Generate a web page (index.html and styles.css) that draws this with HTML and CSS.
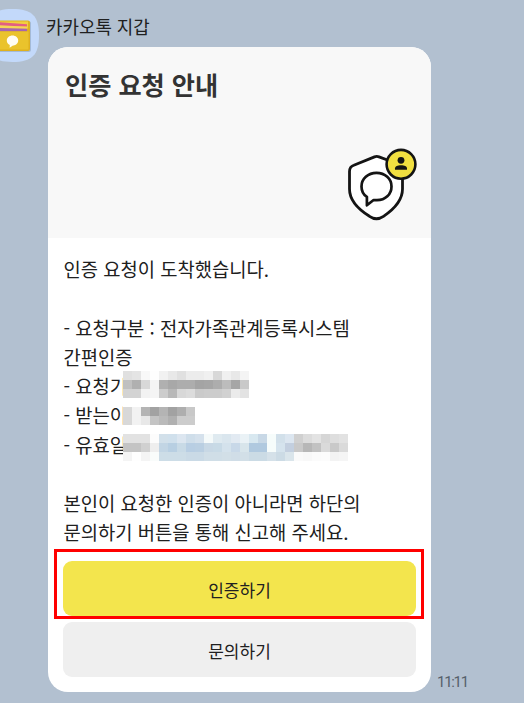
FILE: index.html
```
<!DOCTYPE html>
<html lang="ko">
<head>
    <meta charset="UTF-8" />
    <meta name="viewport" content="width=device-width, initial-scale=1.0" />
    <title>카카오톡 지갑</title>
    <link rel="stylesheet" href="styles.css">
</head>
<body>
    <div class="chat">
        <svg class="avatar" viewBox="0 0 53 53">
            <path fill="#c3d9fa" d="M26.500 0C46 0 53 7 53 26.500S46 53 26.500 53 0 46 0 26.500 7 0 26.500 0z" />
            <rect x="8" y="12" width="37" height="31" rx="2.500" fill="#8fa5c0" opacity=".6" />
            <rect x="8" y="11.500" width="36" height="30.500" rx="2" fill="#dfb11f" />
            <path fill="#f2cf3e" d="M10 12.500h32v7H10z" />
            <path fill="#e25f82" d="M10 13l31 2.300v2.200H10z" />
            <path fill="#f5d658" d="M10 16l31 1.800v2H10z" />
            <path fill="#a766ae" d="M10 19l31 .8v2.400H10z" />
            <path fill="#eac32c" d="M8 22.500h34.500v18H8z" />
            <path fill="#fffdf3" d="M26.500 26.500c3.300 0 5.700 2.200 5.700 5s-2.400 5-5.200 5l-3.400 2.200.2-2.700c-1.800-.9-3-2.500-3-4.500 0-2.800 2.400-5 5.700-5z" />
        </svg>

        <div class="message">
            <div class="sender">카카오톡 지갑</div>
            <div class="row">
                <div class="card">
                    <div class="card-header">
                        <h1 class="title">인증 요청 안내</h1>
                        <svg class="shield" viewBox="0 0 72 76" fill="none" stroke="#141414" stroke-width="2.800" stroke-linejoin="round">
                            <path fill="#fff" d="M29.500 10.900Q31.700 10 34 10.900L44.500 14.800l13 5V43c0 10.500-7.300 19.400-19 27.300-4.800 3.300-9.300 3.300-14 0C12 62.500 4.500 53.500 4.500 43V25.500c0-3.300 1.200-5.200 4.300-6.300z" />
                            <path stroke-width="2.700" d="M31.500 26.800c8.600 0 15 5.900 15 13.600 0 8-6.300 13.800-14.500 13.800-1.200 0-2.300 0-3.400-.2L21.900 59.300v-8.500C18.200 48.500 16.500 44.900 16.500 40.400c0-7.700 6.500-13.600 15-13.600z" />
                            <circle cx="56" cy="18.300" r="14.400" fill="#f1df40" stroke-width="2.600" />
                            <circle cx="56" cy="14.300" r="3.400" fill="#141414" stroke="none" />
                            <path fill="#141414" stroke="none" d="M50 23.800v-1.300c0-2.200 2.500-3.200 6-3.200s6 1 6 3.200v1.300z" />
                        </svg>
                    </div>
                    <div class="card-body">
                        <p>인증 요청이 도착했습니다.</p>
                        <p class="blank"></p>
                        <p>- 요청구분 : 전자가족관계등록시스템</p>
                        <p>간편인증</p>
                        <p class="masked"><span>- 요청기</span><svg class="mask" id="mask-agency"></svg></p>
                        <p class="masked"><span>- 받는이</span><svg class="mask" id="mask-receiver"></svg></p>
                        <p class="masked"><span>- 유효일</span><svg class="mask" id="mask-expiry"></svg></p>
                        <p class="blank"></p>
                        <p>본인이 요청한 인증이 아니라면 하단의</p>
                        <p>문의하기 버튼을 통해 신고해 주세요.</p>
                    </div>
                    <div class="buttons">
                        <button class="confirm">인증하기</button>
                        <button>문의하기</button>
                        <div class="highlight"></div>
                    </div>
                </div>
                <span class="time">11:11</span>
            </div>
        </div>
    </div>

    <script>
    // Pixelated blocks over the private values
    const size = 9;
    const masks = {
      'mask-agency': [
        'e0e0e0 e4e4e4 f8f8f8 fefefe f1f1f1 e8e8e8 e0e0e0 ececec ececec f0f0f0 d8d8d8 f0f0f0 e8e8e8 f4f4f4',
        'c0c0c0 b0b0b0 d8d8d8 f4f4f4 b0b0b0 a8a8a8 adadad adadad a4a4a4 a6a6a6 adadad bcbcbc a6a6a6 c9c9c9',
        'd3d3d3 d3d3d3 f2f2f2 f4f4f4 cccccc b8b8b8 d8d8d8 dcdcdc cacaca cccccc cccccc d1d1d1 ebebeb e3e3e3'
      ],
      'mask-receiver': [
        'd8d8d8 f2f2f2 b4b4b4 a2a2a2 b4b4b4 a2a2a2 aeaeae c8c8c8',
        'd8d8d8 f2f2f2 e8e8e8 c4c4c4 bababa b0b0b0 cccccc cccccc'
      ],
      'mask-expiry': [
        'e2e2e2 e2e2e2 e2e2e2 fcfcfc d2e0ea d0e0ec dce6f0 cfdeea d5e1ec f5fafa dfeaf0 dae6ee e2eaf2 eaf2f6 d8e8f0 c8d8e6 f6fcfb d2e0ea dce6f0 d0d0d0 dcdcdc e3e3e3 d6d6d6 dedede e2e2e2',
        'c4c4c4 c4c4c4 d0d0d0 eeeeee c2d5e4 b8cfe2 c8dae6 b8cee3 bacfe2 c8d8e5 c8dae6 d4e2ec c8d8e8 d8e5eb b0c9df b0c9df f6fcfb d5e3ed c3cfdf c9c9c9 b7b7b7 c2c2c2 dadada c9c9c9 dadada',
        'f4f4f4 fefefe f4f4f4 f9fcfb cddde7 cddde7 cddde7 cadae6 cadae6 d0dee7 d0dee7 d2dfe7 d0dde7 d2dfe7 cbdbe5 cbdbe5 d5e1e9 ccdbe5 dae5eb fafafa f8f8f8 fbfbfb fcfcfc f3f3f3 f5f5f5'
      ]
    };

    Object.keys(masks).forEach(id => {
      const svg = document.getElementById(id);
      const rows = masks[id].map(row => row.split(' '));
      svg.setAttribute('width', rows[0].length * size);
      svg.setAttribute('height', rows.length * size);

      rows.forEach((row, y) => {
        row.forEach((color, x) => {
          const rect = document.createElementNS('http://www.w3.org/2000/svg', 'rect');
          rect.setAttribute('x', x * size);
          rect.setAttribute('y', y * size);
          rect.setAttribute('width', size);
          rect.setAttribute('height', size);
          rect.setAttribute('fill', '#' + color);
          svg.appendChild(rect);
        });
      });
    });
    </script>
</body>
</html>
```
FILE: styles.css
```
* {
    box-sizing: border-box;
}

body {
    margin: 0;
    height: 703px;
    overflow: hidden;
    background-color: #b2c0d0;
    color: #202020;
    font-family: 'Noto Sans CJK KR', sans-serif;
}

.chat {
    display: flex;
    align-items: flex-start;
    padding-top: 9px;
}

.avatar {
    flex: none;
    width: 53px;
    height: 53px;
    margin-left: -14.5px;
}

.message {
    padding-left: 7.5px;
}

.sender {
    height: 38px;
    line-height: 35px;
    font-size: 17.9px;
    white-space: nowrap;
}

.row {
    display: flex;
    align-items: flex-end;
    padding-left: 2px;
}

.card {
    flex: none;
    width: 383px;
    height: 645px;
    border-radius: 20px;
    background-color: #fff;
    overflow: hidden;
}

.card-header {
    display: flex;
    flex-direction: column;
    justify-content: space-between;
    height: 191px;
    padding: 20px 14px 16px 17px;
    background-color: #f8f8f8;
}

.title {
    margin: 0;
    line-height: 35px;
    font-size: 25.2px;
    font-weight: 700;
    color: #333;
}

.shield {
    align-self: flex-end;
    width: 72px;
    height: 76px;
}

.card-body {
    height: 323px;
    padding: 16px 0 0 15.5px;
    font-size: 18.75px;
    line-height: 29.25px;
    white-space: nowrap;
}

    .card-body p {
        height: 29.25px;
        margin: 0;
    }

.masked {
    position: relative;
}

    .masked span {
        display: block;
        width: 59.5px;
        overflow: hidden;
    }

.mask {
    position: absolute;
    left: 59.5px;
}

#mask-agency {
    top: 0;
}

#mask-receiver {
    top: 6.75px;
}

#mask-expiry {
    top: 4.5px;
}

.buttons {
    position: relative;
    display: flex;
    flex-direction: column;
    gap: 6px;
    padding: 0 15px;
}

button {
    height: 55px;
    padding: 2px 0 0;
    border: none;
    border-radius: 9px;
    background-color: #efefef;
    color: #202020;
    font-family: inherit;
    font-size: 17px;
    cursor: pointer;
}

.confirm {
    background-color: #f3e54d;
}

.highlight {
    position: absolute;
    left: 6px;
    top: -12px;
    width: 370px;
    height: 70px;
    border: 3px solid #f00;
    pointer-events: none;
}

.time {
    padding-left: 6px;
    line-height: 20px;
    font-family: Roboto, sans-serif;
    font-size: 15px;
    letter-spacing: -1.3px;
    color: #56606b;
}
```
